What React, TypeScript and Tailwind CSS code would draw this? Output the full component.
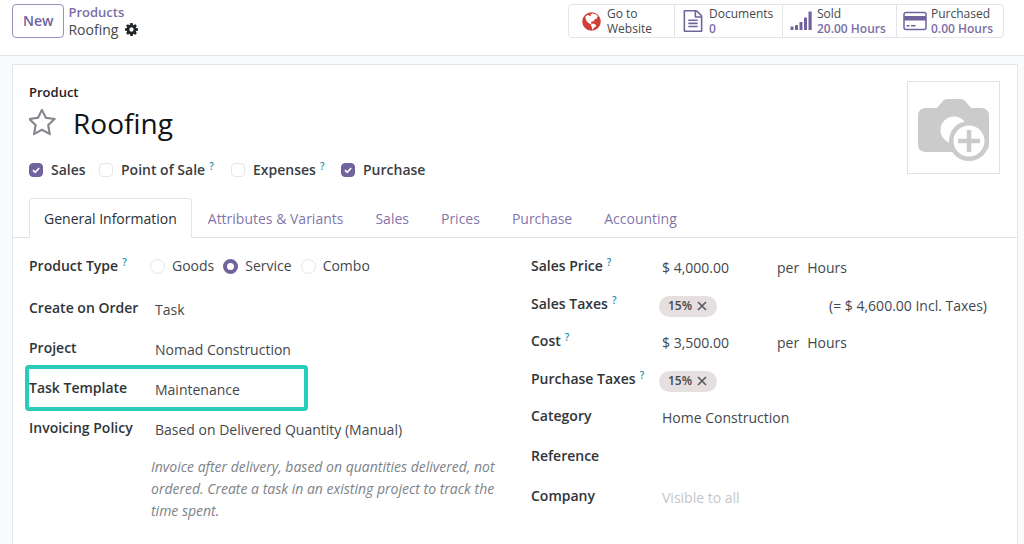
import type { ReactNode } from 'react';

const tabs = ['General Information', 'Attributes & Variants', 'Sales', 'Prices', 'Purchase', 'Accounting'];

export default function App() {
  return (
    <div className="flex min-h-screen flex-col bg-[#f8fafb] font-['Open_Sans',sans-serif] text-sm text-[#44484d]">
      {/* === Control panel === */}
      <header className="flex h-14 items-start justify-between border-b border-[#e3e6e9] bg-white pl-3 pr-5 pt-1">
        <div className="flex items-start gap-1">
          <button className="h-[34px] rounded border border-[#9a90bd] px-[10px] font-semibold text-[#71639e]">New</button>
          <nav className="flex flex-col leading-[17px]">
            <a href="#products" className="text-[13px] font-semibold text-[#7b6ea6]">
              Products
            </a>
            <div className="flex items-center gap-1.5">
              <span>Roofing</span>
              <button aria-label="Actions">
                <CogIcon />
              </button>
            </div>
          </nav>
        </div>

        <div className="flex h-[34px] divide-x divide-[#e3e6e9] rounded border border-[#e3e6e9]">
          <StatButton width="w-[106px] pl-[10px]" icon={<GlobeIcon />} title="Go to" value="Website" plain />
          <StatButton width="w-[108px] pl-1.5" icon={<FileIcon />} title="Documents" value="0" />
          <StatButton width="w-[114px] pl-1.5" icon={<SignalIcon />} title="Sold" value="20.00 Hours" />
          <StatButton width="w-[106px] pl-1.5" icon={<CardIcon />} title="Purchased" value="0.00 Hours" />
        </div>
      </header>

      {/* === Form sheet === */}
      <main className="ml-3 mr-[6px] mt-2 flex-1 border border-b-0 border-[#e3e6e9] bg-white">
        <div className="flex justify-between pl-4 pr-[17px] pt-4">
          <div>
            <label htmlFor="name" className="block pt-px text-[13px] font-semibold leading-5 text-[#1d2024]">
              Product
            </label>
            <div className="flex h-[42px] items-center gap-4">
              <button aria-label="Favorite">
                <StarIcon />
              </button>
              <input id="name" defaultValue="Roofing" className="w-80 text-[28px] leading-9 text-[#111315] outline-none" />
            </div>
            <div className="mt-4 flex h-5 items-center font-semibold">
              <Check id="sale" label="Sales" checked className="w-[70px]" />
              <Check id="pos" label="Point of Sale" help className="w-[132px]" />
              <Check id="expense" label="Expenses" help className="w-[110px]" />
              <Check id="purchase" label="Purchase" checked className="w-24" />
            </div>
          </div>
          <button
            aria-label="Upload image"
            className="flex h-[93px] w-[93px] items-center justify-center border border-[#dfe3e6] pt-1"
          >
            <CameraIcon />
          </button>
        </div>

        <div role="tablist" className="mt-[18px] flex h-10 border-b border-[#dee2e6] pl-4">
          {tabs.map((tab, i) => (
            <button
              key={tab}
              role="tab"
              aria-selected={i === 0}
              className={
                i === 0
                  ? 'h-10 rounded-t border border-b-0 border-[#e3e6e9] bg-white px-[14px] text-[#2b2f33]'
                  : 'px-4 pt-0.5 text-[#71639e]/90'
              }
            >
              {tab}
            </button>
          ))}
        </div>

        <div className="grid grid-cols-[1fr_1fr] pl-4 pr-[30px] pt-2">
          <div>
            <div className="flex h-11 items-center">
              <FieldLabel text="Product Type" help width="w-[121px]" />
              <Radio label="Goods" />
              <Radio label="Service" checked />
              <Radio label="Combo" />
            </div>
            <Row id="create-on-order" label="Create on Order">
              <Select id="create-on-order" value="Task" />
            </Row>
            <Row id="project" label="Project">
              <TextInput id="project" value="Nomad Construction" />
            </Row>
            <div className="relative">
              <Row id="template" label="Task Template">
                <TextInput id="template" value="Maintenance" />
              </Row>
              <div className="pointer-events-none absolute -left-1 -top-[5px] h-[46px] w-[283px] rounded-sm border-4 border-[#27cdb8]" />
            </div>
            <Row id="policy" label="Invoicing Policy">
              <Select id="policy" value="Based on Delivered Quantity (Manual)" />
            </Row>
            <p className="ml-[122px] w-[360px] pt-1.5 italic leading-[22px] text-[#7d8389]">
              Invoice after delivery, based on quantities delivered, not ordered. Create a task in an existing project to
              track the time spent.
            </p>
          </div>

          <div className="pl-5">
            <div className="flex h-11 items-center">
              <FieldLabel id="price" text="Sales Price" help />
              <Price id="price" value="$ 4,000.00" />
            </div>
            <div className="flex h-8 items-center">
              <FieldLabel text="Sales Taxes" help width="w-[128px]" />
              <TaxTag />
              <span className="ml-auto whitespace-nowrap">(= $ 4,600.00 Incl. Taxes)</span>
            </div>
            <div className="flex h-[42px] items-center">
              <FieldLabel id="cost" text="Cost" help />
              <Price id="cost" value="$ 3,500.00" />
            </div>
            <div className="flex h-[34px] items-center">
              <FieldLabel text="Purchase Taxes" help width="w-[128px]" />
              <TaxTag />
            </div>
            <div className="flex h-10 items-center">
              <FieldLabel id="category" text="Category" />
              <TextInput id="category" value="Home Construction" />
            </div>
            <div className="flex h-10 items-center">
              <FieldLabel id="reference" text="Reference" />
              <TextInput id="reference" value="" />
            </div>
            <div className="flex h-10 items-center">
              <FieldLabel id="company" text="Company" />
              <TextInput id="company" value="" placeholder="Visible to all" />
            </div>
          </div>
        </div>
      </main>
    </div>
  );
}

function StatButton({
  icon,
  title,
  value,
  width,
  plain,
}: {
  icon: ReactNode;
  title: string;
  value: string;
  width: string;
  plain?: boolean;
}) {
  return (
    <button className={`flex items-center gap-1 text-left ${width}`}>
      <span className="flex w-6 shrink-0 justify-center">{icon}</span>
      <span className="flex flex-col whitespace-nowrap text-xs leading-[15px]">
        <span>{title}</span>
        <span className={plain ? '' : 'font-semibold text-[#7b6ea6]'}>{value}</span>
      </span>
    </button>
  );
}

function Help() {
  return <sup className="ml-1 text-[10px] font-semibold leading-none text-[#1d93a8]">?</sup>;
}

function Check({
  id,
  label,
  checked,
  help,
  className,
}: {
  id: string;
  label: string;
  checked?: boolean;
  help?: boolean;
  className: string;
}) {
  return (
    <div className={`flex items-center ${className}`}>
      <span className="relative mr-2 h-[14px] w-[14px] shrink-0">
        <input
          id={id}
          type="checkbox"
          defaultChecked={checked}
          className="peer block h-[14px] w-[14px] appearance-none rounded-sm border border-[#e3e6e9] checked:border-[#71639e] checked:bg-[#71639e]"
        />
        <svg viewBox="0 0 14 14" className="pointer-events-none absolute inset-0 hidden peer-checked:block">
          <path d="M4 7.2l2.2 2.1L10.2 5" fill="none" stroke="#fff" strokeWidth="1.7" />
        </svg>
      </span>
      <label htmlFor={id} className="whitespace-nowrap text-[#3a3e43]">
        {label}
        {help && <Help />}
      </label>
    </div>
  );
}

function Radio({ label, checked }: { label: string; checked?: boolean }) {
  return (
    <label className="mr-[9px] flex items-center gap-[7px] pb-1">
      <input
        type="radio"
        name="product-type"
        defaultChecked={checked}
        className="h-[15px] w-[15px] appearance-none rounded-full border border-[#e3e6e9] checked:border-4 checked:border-[#71639e]"
      />
      {label}
    </label>
  );
}

function FieldLabel({ id, text, help, width = 'w-[131px]' }: { id?: string; text: string; help?: boolean; width?: string }) {
  return (
    <label htmlFor={id} className={`shrink-0 whitespace-nowrap pb-1 font-semibold text-[#303438] ${width}`}>
      {text}
      {help && <Help />}
    </label>
  );
}

function Row({ id, label, children }: { id: string; label: string; children: ReactNode }) {
  return (
    <div className="flex h-10 items-center">
      <FieldLabel id={id} text={label} width="w-[126px]" />
      {children}
    </div>
  );
}

function TextInput({ id, value, placeholder }: { id: string; value: string; placeholder?: string }) {
  return (
    <input
      id={id}
      defaultValue={value}
      placeholder={placeholder}
      className="min-w-0 flex-1 outline-none placeholder:text-[#c3c7cb]"
    />
  );
}

function Select({ id, value }: { id: string; value: string }) {
  return (
    <select id={id} defaultValue={value} className="min-w-0 flex-1 appearance-none outline-none">
      <option>{value}</option>
    </select>
  );
}

function Price({ id, value }: { id: string; value: string }) {
  return (
    <>
      <input id={id} defaultValue={value} className="w-[115px] outline-none" />
      <span className="mr-2">per</span>
      <span>Hours</span>
    </>
  );
}

function TaxTag() {
  return (
    <span className="flex h-[21px] items-center gap-1 rounded-full bg-[#e6dfe0] px-[9px] text-xs font-semibold">
      15%
      <button aria-label="Remove tax">
        <svg width="12" height="12" viewBox="0 0 12 12">
          <path d="M2 2l8 8M10 2l-8 8" stroke="#55595e" strokeWidth="1.6" />
        </svg>
      </button>
    </span>
  );
}

function CogIcon() {
  return (
    <svg width="15" height="15" viewBox="0 0 1792 1792" fill="#212529">
      <path d="M1152 896q0-106-75-181t-181-75-181 75-75 181 75 181 181 75 181-75 75-181zm512-109v222q0 12-8 23t-20 13l-185 28q-19 54-39 91 35 50 107 138 10 12 10 25t-9 23q-27 37-99 108t-94 71q-12 0-26-9l-138-108q-44 23-91 38-16 136-29 186-7 28-36 28h-222q-14 0-24.5-8.5t-11.5-21.5l-28-184q-49-16-90-37l-141 107q-10 9-25 9-14 0-25-11-126-114-165-168-7-10-7-23 0-12 8-23 15-21 51-66.5t54-70.5q-27-50-41-99l-183-27q-13-2-21-12.5t-8-23.5v-222q0-12 8-23t19-13l186-28q14-46 39-92-40-57-107-138-10-12-10-24 0-10 9-23 26-36 98.5-107.5t94.5-71.5q13 0 26 10l138 107q44-23 91-38 16-136 29-186 7-28 36-28h222q14 0 24.5 8.5t11.5 21.5l28 184q49 16 90 37l142-107q9-9 24-9 13 0 25 10 129 119 165 170 7 8 7 22 0 12-8 23-15 21-51 66.5t-54 70.5q26 50 41 98l183 28q13 2 21 12.5t8 23.5z" />
    </svg>
  );
}

function StarIcon() {
  return (
    <svg width="28" height="28" viewBox="64 64 1664 1664" fill="#85898d">
      <path d="M1137 1004l306-297-422-62-189-382-189 382-422 62 306 297-73 421 378-199 377 199zm527-357q0 22-26 48l-363 354 86 500q1 7 1 20 0 50-41 50-19 0-40-12l-449-236-449 236q-22 12-40 12-21 0-31.5-14.5t-10.5-35.5q0-6 2-20l86-500-364-354q-25-27-25-48 0-37 56-46l502-73 225-455q19-41 49-41t49 41l225 455 502 73q56 9 56 46z" />
    </svg>
  );
}

function GlobeIcon() {
  return (
    <svg width="19" height="19" viewBox="0 0 19 19">
      <circle cx="9.5" cy="9.5" r="9.3" fill="#d23f3a" />
      <path
        d="M3.4 4.6L5.6 3l1.6.3.8 1.2 1.1-.9-.6-1.4 2-.8 3.4 1.1 2.3 2.1-1.2.5-.2 1.6-1.7.3-1.5 2.3-1.7.2-1.2 1.4 1.5 1.2-.5.7L6.5 11 4.7 9.3 3.7 7z"
        fill="#fff"
      />
      <path d="M9.4 12.2l2-.7 2.7 1.6-.5 1.7-1.7 1-1 1.7-.9-.3-.1-2.2-1-1.3z" fill="#fff" />
    </svg>
  );
}

function FileIcon() {
  return (
    <svg width="22" height="22" viewBox="0 0 1792 1792" fill="#71639e">
      <path d="M1596 380q28 28 48 76t20 88v1152q0 40-28 68t-68 28h-1344q-40 0-68-28t-28-68v-1600q0-40 28-68t68-28h896q40 0 88 20t76 48zm-444-244v376h376q-10-29-22-41l-313-313q-12-12-41-22zm384 1528v-1024h-416q-40 0-68-28t-28-68v-416h-768v1536h1280zm-1024-864q0-14 9-23t23-9h704q14 0 23 9t9 23v64q0 14-9 23t-23 9h-704q-14 0-23-9t-9-23v-64zm736 224q14 0 23 9t9 23v64q0 14-9 23t-23 9h-704q-14 0-23-9t-9-23v-64q0-14 9-23t23-9h704zm0 256q14 0 23 9t9 23v64q0 14-9 23t-23 9h-704q-14 0-23-9t-9-23v-64q0-14 9-23t23-9h704z" />
    </svg>
  );
}

function SignalIcon() {
  return (
    <svg width="23" height="20" viewBox="0 0 23 20" fill="#71639e">
      <rect x="0.5" y="15.5" width="3" height="3.5" rx="0.6" />
      <rect x="5" y="14" width="3" height="5" rx="0.6" />
      <rect x="9.5" y="11" width="3" height="8" rx="0.6" />
      <rect x="14" y="6.5" width="3" height="12.5" rx="0.6" />
      <rect x="18.5" y="0.5" width="3.2" height="18.5" rx="0.6" />
    </svg>
  );
}

function CardIcon() {
  return (
    <svg width="24" height="20" viewBox="0 0 24 20" fill="#71639e">
      <rect x="1" y="1.5" width="22" height="17" rx="2" fill="none" stroke="#71639e" strokeWidth="1.5" />
      <rect x="1" y="5" width="22" height="4.5" />
      <rect x="3.5" y="14" width="3" height="1.5" />
      <rect x="8" y="14" width="4.5" height="1.5" />
    </svg>
  );
}

function CameraIcon() {
  return (
    <svg width="72" height="64" viewBox="0 0 72 64">
      <path
        d="M8 10h11l5-6q2-3 5-3h14q3 0 5 3l5 6h10q8 0 8 8v28q0 8-8 8H8q-8 0-8-8V18q0-8 8-8z"
        fill="#cbcbcb"
      />
      <circle cx="36" cy="32" r="13.5" fill="#fff" />
      <circle cx="51" cy="43" r="20" fill="#cbcbcb" />
      <circle cx="51" cy="43" r="15.5" fill="#fff" />
      <path d="M51 32v22M40 43h22" stroke="#cbcbcb" strokeWidth="4.5" />
    </svg>
  );
}
